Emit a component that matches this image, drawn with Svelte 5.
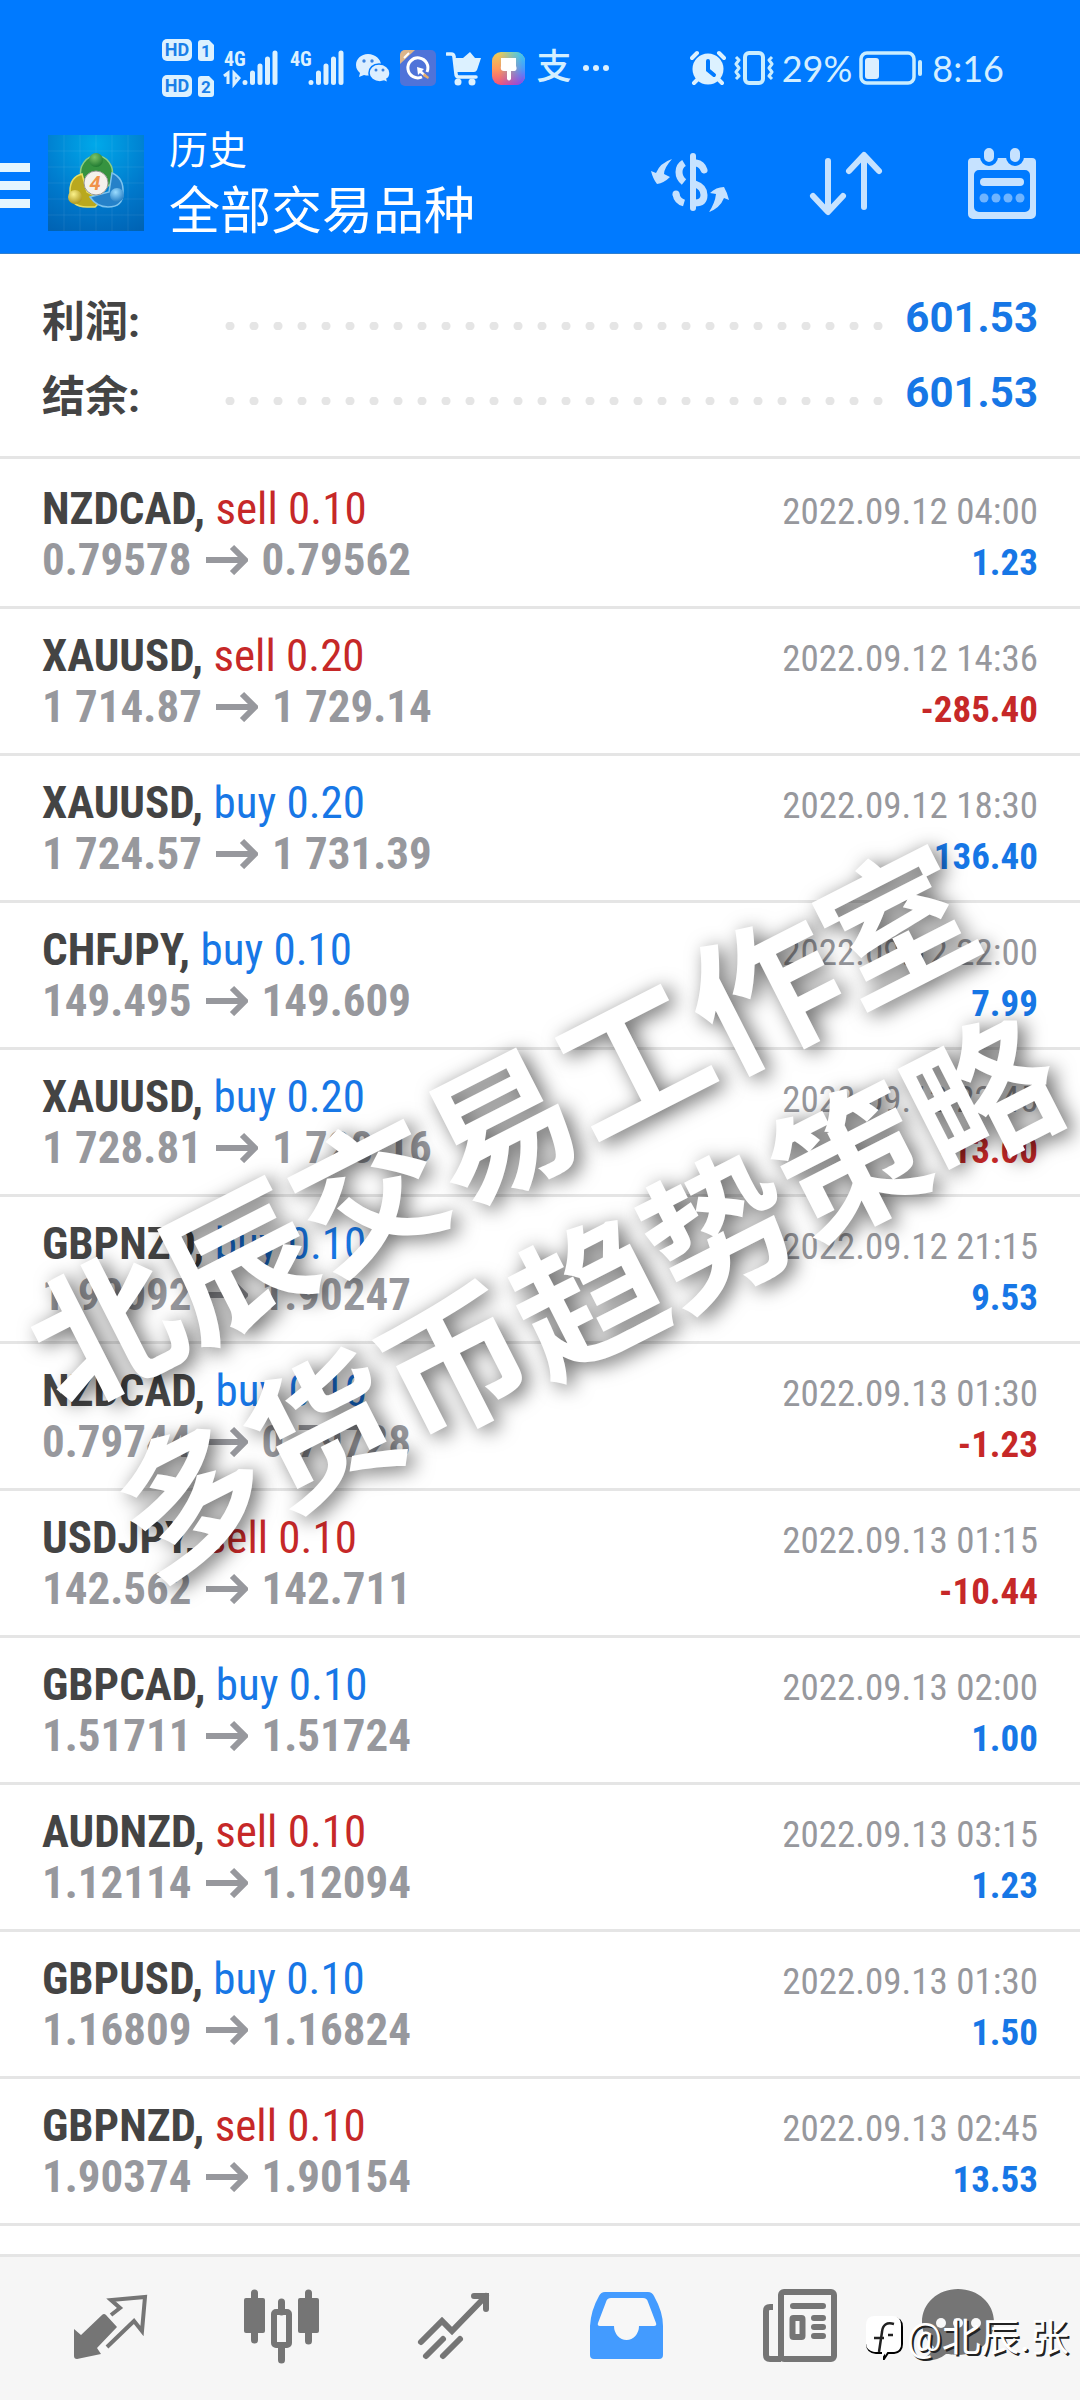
<script>
  let summary = [
    { label: "利润:", value: "601.53" },
    { label: "结余:", value: "601.53" }
  ];

  let deals = [
    { symbol: "NZDCAD", side: "sell", lots: "0.10", open: "0.79578", close: "0.79562", time: "2022.09.12 04:00", profit: "1.23" },
    { symbol: "XAUUSD", side: "sell", lots: "0.20", open: "1 714.87", close: "1 729.14", time: "2022.09.12 14:36", profit: "-285.40" },
    { symbol: "XAUUSD", side: "buy", lots: "0.20", open: "1 724.57", close: "1 731.39", time: "2022.09.12 18:30", profit: "136.40" },
    { symbol: "CHFJPY", side: "buy", lots: "0.10", open: "149.495", close: "149.609", time: "2022.09.12 22:00", profit: "7.99" },
    { symbol: "XAUUSD", side: "buy", lots: "0.20", open: "1 728.81", close: "1 728.16", time: "2022.09.12 22:45", profit: "-13.00" },
    { symbol: "GBPNZD", side: "buy", lots: "0.10", open: "1.90092", close: "1.90247", time: "2022.09.12 21:15", profit: "9.53" },
    { symbol: "NZDCAD", side: "buy", lots: "0.10", open: "0.79744", close: "0.79728", time: "2022.09.13 01:30", profit: "-1.23" },
    { symbol: "USDJPY", side: "sell", lots: "0.10", open: "142.562", close: "142.711", time: "2022.09.13 01:15", profit: "-10.44" },
    { symbol: "GBPCAD", side: "buy", lots: "0.10", open: "1.51711", close: "1.51724", time: "2022.09.13 02:00", profit: "1.00" },
    { symbol: "AUDNZD", side: "sell", lots: "0.10", open: "1.12114", close: "1.12094", time: "2022.09.13 03:15", profit: "1.23" },
    { symbol: "GBPUSD", side: "buy", lots: "0.10", open: "1.16809", close: "1.16824", time: "2022.09.13 01:30", profit: "1.50" },
    { symbol: "GBPNZD", side: "sell", lots: "0.10", open: "1.90374", close: "1.90154", time: "2022.09.13 02:45", profit: "13.53" }
  ];

  const isLoss = deal => deal.profit.startsWith("-");
</script>

<div class="app">
  <header>
    <!-- Status bar -->
    <div class="status">
      <div class="status-left">
        <svg width="52" height="60" viewBox="0 0 52 60">
          <g fill="#dcf1ff">
            <rect y="1" width="30" height="22" rx="5" />
            <rect y="37" width="30" height="22" rx="5" />
            <path d="M39 2h8l5 5v13a3 3 0 0 1-3 3H39a3 3 0 0 1-3-3V5a3 3 0 0 1 3-3z" />
            <path d="M39 38h8l5 5v13a3 3 0 0 1-3 3H39a3 3 0 0 1-3-3V41a3 3 0 0 1 3-3z" />
          </g>
          <g fill="#1a7fe8" font-size="18" font-weight="700" text-anchor="middle">
            <text x="15" y="18">HD</text>
            <text x="15" y="54">HD</text>
            <text x="44" y="19" font-size="17">1</text>
            <text x="44" y="55" font-size="17">2</text>
          </g>
        </svg>
        <svg class="signal" width="54" height="36" viewBox="0 0 54 36">
          <text x="0" y="16" font-size="20" fill="#dcf1ff" font-weight="700">4G</text>
          <path d="M0 26l4-3v11M10 23v11l5-6z" fill="none" stroke="#dcf1ff" stroke-width="3" />
          <path d="M21 32.500v0M28.500 23v9.500M36 16v16.500M43.500 9v23.500M51 3v29.500" stroke="#dcf1ff" stroke-width="5" stroke-linecap="round" />
        </svg>
        <svg class="signal" width="54" height="36" viewBox="0 0 54 36">
          <text x="0" y="16" font-size="20" fill="#dcf1ff" font-weight="700">4G</text>
          <path d="M21 32.500v0M28.500 23v9.500M36 16v16.500M43.500 9v23.500M51 3v29.500" stroke="#dcf1ff" stroke-width="5" stroke-linecap="round" />
        </svg>
        <svg width="34" height="36" viewBox="0 0 34 36">
          <path d="M12 4C5 4 0 9 0 15c0 4 2 6 4 8l-1 4 5-2c7 2 17-1 17-10C25 9 19 4 12 4z" fill="#dcefff" />
          <path d="M23 14c-6 0-10 4-10 9s5 9 11 9l4-1 4 2-1-4c2-1 3-3 3-6 0-5-5-9-11-9z" fill="#dcefff" stroke="#007aff" stroke-width="1.500" />
          <g fill="#3b83e0"><circle cx="8" cy="11" r="1.700" /><circle cx="16" cy="11" r="1.700" /><circle cx="20" cy="20" r="1.500" /><circle cx="27" cy="20" r="1.500" /></g>
        </svg>
        <svg width="36" height="36" viewBox="0 0 36 36">
          <rect width="36" height="36" rx="5" fill="#4f73d9" />
          <path d="M0 5a5 5 0 0 1 5-5h10L0 14z" fill="#dcb58a" />
          <path d="M4 8l5-5" stroke="#fff" stroke-width="2" />
          <path d="M22 27a10 10 0 1 1 5-5" fill="none" stroke="#fff" stroke-width="3" />
          <path d="M17 17l7 2-2 2 4 4-2 1-4-3-2 2z" fill="#fff" />
          <path d="M24 23l5 4-1 2-5-3z" fill="#e5ad6b" />
        </svg>
        <svg width="36" height="36" viewBox="0 0 36 36">
          <path d="M1 4h4q3 0 3 3l2 17q0 3 3 3h17" fill="none" stroke="#dcf1ff" stroke-width="3.500" stroke-linecap="round" />
          <path d="M9 8h8l7-6 5 6h6l-4 12q-1 2-3 2H11z" fill="#dcf1ff" />
          <circle cx="12" cy="32" r="3.500" fill="#dcf1ff" /><circle cx="26" cy="32" r="3.500" fill="#dcf1ff" />
        </svg>
        <svg width="34" height="36" viewBox="0 0 34 36">
          <defs>
            <linearGradient id="paintWarm" x1="0" y1="0" x2="0" y2="1">
              <stop offset="0" stop-color="#e8cf5a" /><stop offset=".5" stop-color="#ff9a5c" /><stop offset="1" stop-color="#f0527c" />
            </linearGradient>
            <linearGradient id="paintCool" x1="0" y1="0" x2="0" y2="1">
              <stop offset="0" stop-color="#35cdf5" /><stop offset=".5" stop-color="#4c9bfa" /><stop offset="1" stop-color="#8a45ea" />
            </linearGradient>
            <linearGradient id="paintFade"><stop offset=".2" stop-color="#000" /><stop offset=".9" stop-color="#fff" /></linearGradient>
            <mask id="paintMask"><rect width="34" height="36" fill="url(#paintFade)" /></mask>
          </defs>
          <rect y="2" width="33" height="33" rx="9" fill="url(#paintWarm)" />
          <rect y="2" width="33" height="33" rx="9" fill="url(#paintCool)" mask="url(#paintMask)" />
          <path d="M9 8h15v8q2 5-3 5h-2v8q-2 3-4 0v-8h-3q-4 0-3-5z" fill="#fff" />
        </svg>
        <span class="pay">支</span>
        <svg width="28" height="36" viewBox="0 0 28 36"><g fill="#dcf1ff"><circle cx="4" cy="18" r="3" /><circle cx="14" cy="18" r="3" /><circle cx="24" cy="18" r="3" /></g></svg>
      </div>
      <div class="status-right">
        <svg width="36" height="36" viewBox="0 0 36 36">
          <circle cx="18" cy="19" r="15.500" fill="#dcf1ff" />
          <path d="M2 8l5-5M34 8l-5-5M8 29l-4 4M28 29l4 4" stroke="#dcf1ff" stroke-width="4" stroke-linecap="round" />
          <path d="M18 11v9l6 5" fill="none" stroke="#007aff" stroke-width="4" stroke-linecap="round" />
        </svg>
        <svg width="42" height="36" viewBox="0 0 42 36">
          <rect x="12" y="3" width="18" height="30" rx="4" fill="none" stroke="#c9edff" stroke-width="4" />
          <path d="M3 7l3 3-3 4 3 4-3 4 3 4-3 3M39 7l-3 3 3 4-3 4 3 4-3 4 3 3" fill="none" stroke="#c9edff" stroke-width="3" stroke-linejoin="round" />
        </svg>
        <span>29%</span>
        <svg width="66" height="36" viewBox="0 0 66 36">
          <rect x="2" y="3" width="53" height="30" rx="6" fill="none" stroke="#c9edff" stroke-width="3.500" />
          <rect x="6" y="8" width="14" height="21" rx="3" fill="#dcefff" />
          <path d="M61 12v12" stroke="#c9edff" stroke-width="4" stroke-linecap="round" />
        </svg>
        <span>8:16</span>
      </div>
    </div>
    <!-- / Status bar -->
    <!-- App bar -->
    <div class="bar">
      <button class="menu" aria-label="Menu"><i></i><i></i><i></i></button>
      <svg class="logo" width="96" height="96" viewBox="0 0 96 96">
        <defs>
          <radialGradient id="logoBg" cx=".5" cy=".1" r="1"><stop offset="0" stop-color="#00a9ea" /><stop offset=".6" stop-color="#0079cc" /><stop offset="1" stop-color="#0063b4" /></radialGradient>
          <radialGradient id="green" cx=".4" cy=".3" r=".8"><stop offset="0" stop-color="#7cc468" /><stop offset="1" stop-color="#14702a" /></radialGradient>
          <radialGradient id="yellow" cx=".4" cy=".3" r=".8"><stop offset="0" stop-color="#fbf28a" /><stop offset="1" stop-color="#a58c10" /></radialGradient>
          <radialGradient id="sky" cx=".4" cy=".3" r=".8"><stop offset="0" stop-color="#9bdcff" /><stop offset="1" stop-color="#1873bd" /></radialGradient>
        </defs>
        <rect width="96" height="96" fill="url(#logoBg)" />
        <path d="M16 0v96M32 0v96M48 0v96M64 0v96M80 0v96M0 16h96M0 32h96M0 48h96M0 64h96M0 80h96" stroke="#fff" stroke-opacity=".07" />
        <path d="M33 42a16 17 0 1 1 31 0q0 6-3 9L48 37 36 47z" fill="#369340" stroke="#8ccd83" stroke-width="1.500" />
        <path d="M34 39q-12 3-12 17 0 16 17 16h8l7-7-15-8z" fill="#b9a81e" stroke="#e8df63" stroke-width="1.500" />
        <path d="M64 38q12 5 11 20 0 14-15 14-11 0-18-10l19-5z" fill="#2581c9" stroke="#7dc3ee" stroke-width="1.500" />
        <circle cx="48" cy="25" r="7" fill="url(#green)" />
        <circle cx="27" cy="62" r="7" fill="url(#yellow)" />
        <circle cx="69" cy="60" r="7" fill="url(#sky)" />
        <circle cx="48" cy="48" r="12" fill="#f4f1ec" stroke="#999" />
        <text x="47" y="55" text-anchor="middle" font-size="20" font-weight="700" font-style="italic" fill="#f0924a">4</text>
      </svg>
      <h1><small>历史</small>全部交易品种</h1>
      <div class="tools">
        <button aria-label="Symbols">
          <svg width="100" height="84" viewBox="0 0 100 84" fill="none" stroke="#c6e2ff">
            <path d="M53 15v52" stroke-width="6" stroke-linecap="round" />
            <path d="M44 22q-5 3-5 9t5 10" stroke-width="7" />
            <path d="M36 53q1 7 8 9" stroke-width="7" />
            <circle cx="36" cy="53" r="3.500" fill="#c6e2ff" stroke="none" />
            <path d="M56 22q6 1 8 7" stroke-width="7" stroke-linecap="round" />
            <path d="M55 43q9 3 9 11t-9 8" stroke-width="7" />
            <path d="M32 18Q24 27 24 33L30 36Q24 42 17 43Q13 38 11 30L16 32Q20 22 32 18Z" fill="#c6e2ff" stroke="none" />
            <path d="M69 71Q75 62 76 53L70 52Q76 46 84 46Q87 51 89 59L84 57Q80 67 69 71Z" fill="#c6e2ff" stroke="none" />
          </svg>
        </button>
        <button aria-label="Sort">
          <svg width="100" height="84" viewBox="0 0 100 84" fill="none" stroke="#c6e2ff" stroke-width="6" stroke-linecap="round" stroke-linejoin="round">
            <path d="M28 20v50M13 55l15 16 15-16M64 66V15M49 30l15-16 15 16" />
          </svg>
        </button>
        <button aria-label="Period">
          <svg width="100" height="84" viewBox="0 0 100 84">
            <path d="M12 17h60a4 4 0 0 1 4 4v52a5 5 0 0 1-5 5H13a5 5 0 0 1-5-5V21a4 4 0 0 1 4-4zm7 12a5 5 0 0 0-5 5v32a5 5 0 0 0 5 5h46a5 5 0 0 0 5-5V34a5 5 0 0 0-5-5z" fill="#c6e2ff" fill-rule="evenodd" />
            <g fill="#c6e2ff" stroke="#007aff" stroke-width="4"><rect x="22" y="5" width="14" height="18" rx="7" /><rect x="48" y="5" width="14" height="18" rx="7" /></g>
            <path d="M24 41h36" stroke="#c6e2ff" stroke-width="8" stroke-linecap="round" />
            <g fill="#6fb4ff"><circle cx="24" cy="57" r="4.500" /><circle cx="36" cy="57" r="4.500" /><circle cx="48" cy="57" r="4.500" /><circle cx="60" cy="57" r="4.500" /></g>
          </svg>
        </button>
      </div>
    </div>
    <!-- / App bar -->
  </header>

  <main>
    <dl class="summary">
      {#each summary as item}
        <div class="total">
          <dt>{item.label}</dt>
          <span class="dots"></span>
          <dd>{item.value}</dd>
        </div>
      {/each}
    </dl>

    <ul>
      {#each deals as deal}
        <li>
          <div class="line">
            <span class="symbol">{deal.symbol}, <span class={deal.side}>{deal.side} {deal.lots}</span></span>
            <time>{deal.time}</time>
          </div>
          <div class="line">
            <span class="prices">
              {deal.open}
              <svg width="42" height="32" viewBox="0 0 42 32"><path d="M0 17h38M26 4l13 13-13 13" fill="none" stroke="#97989d" stroke-width="6" /></svg>
              {deal.close}
            </span>
            <span class="profit" class:loss={isLoss(deal)}>{deal.profit}</span>
          </div>
        </li>
      {/each}
    </ul>
  </main>

  <!-- Tab bar -->
  <nav>
    <button aria-label="Quotes">
      <svg width="104" height="80" viewBox="0 0 104 80">
        <path d="M18 41l7 6 21-20q2-2 4 0l11 12-20 21 4 6-24 5q-3 0-3-3z" fill="#757575" />
        <path d="M55 27l9-7-9-8 34-3-3 34-8-10-27 26" fill="none" stroke="#757575" stroke-width="4" />
      </svg>
    </button>
    <button aria-label="Charts">
      <svg width="104" height="80" viewBox="0 0 104 80">
        <path d="M25.500 5v47M79.500 5v48M52.500 14v10M52.500 58v14" stroke="#757575" stroke-width="7" stroke-linecap="round" />
        <rect x="15" y="10" width="21" height="35" rx="2" fill="#757575" />
        <rect x="69" y="10" width="21" height="35" rx="2" fill="#757575" />
        <rect x="45" y="24" width="15" height="33" rx="2" fill="none" stroke="#757575" stroke-width="6" />
      </svg>
    </button>
    <button aria-label="Trade">
      <svg width="104" height="80" viewBox="0 0 104 80" fill="none" stroke="#757575" stroke-width="6" stroke-linecap="round">
        <path d="M19 54l21-21 10 10 34-35M72 8h12v13" />
        <path d="M24 68l17-17M41 68l17-17" />
      </svg>
    </button>
    <button aria-label="History">
      <svg width="104" height="80" viewBox="0 0 104 80">
        <path d="M16 38Q17 22 25 8q2-4 6-4h43q4 0 6 4 9 16 9 30v29q0 4-4 4H20q-4 0-4-4z" fill="#439bff" />
        <path d="M26 38q-3 0-2-3l8-21q1-4 5-4h32q4 0 5 4l8 21q1 3-2 3H65a12.500 14 0 0 1-25 0z" fill="#f7f7f7" />
      </svg>
    </button>
    <button aria-label="News">
      <svg width="104" height="80" viewBox="0 0 104 80" fill="none" stroke="#757575" stroke-width="6">
        <rect x="34" y="4" width="53" height="67" rx="3" />
        <path d="M26 19h-3q-4 0-4 4v44q0 4 4 4h11" />
        <path d="M46 18h30M67 30h9M67 39h9M67 48h9" stroke-linecap="round" />
        <rect x="45.500" y="30" width="10" height="19" rx="1" />
      </svg>
    </button>
    <button aria-label="Messages">
      <svg width="104" height="80" viewBox="0 0 104 80">
        <path d="M38 1c20 0 36 14 36 33S58 67 38 67c-6 0-8-1-12-1q-8 7-22 7-2 0-1-2 8-5 11-12C6 53 2 44 2 34 2 15 18 1 38 1z" fill="#757575" />
        <g fill="#f7f7f7"><circle cx="21" cy="35" r="5" /><circle cx="38" cy="35" r="5" /><circle cx="56" cy="35" r="5" /></g>
      </svg>
    </button>
    <div class="author">
      <svg width="38" height="44" viewBox="0 0 38 44">
        <path d="M10 2h17q9 0 9 9v17q0 8-8 9h-6l-4 6v-6h-8q-9-1-9-9" fill="none" stroke="#000" stroke-width="2" />
        <path d="M9 0h17q9 0 9 9v18q0 8-8 9h-7l-4 6v-6H9q-9-1-9-9V9q0-9 9-9z" fill="#fff" />
        <path d="M28 8q-11-3-12 8l-3 20M8 22h10M22 19h5" fill="none" stroke="#222" stroke-width="2.500" />
      </svg>
      <span>@北辰.张</span>
    </div>
  </nav>
  <!-- / Tab bar -->

  <p class="watermark">北辰交易工作室<br />多货币趋势策略</p>
</div>

<style>
  :global(body) {
    margin: 0;
    background: #fff;
  }
  .app {
    position: relative;
    display: flex;
    flex-direction: column;
    height: 100vh;
    overflow: hidden;
    font-family: Roboto, "Noto Sans CJK SC", sans-serif;
    color: #444;
  }
  button {
    padding: 0;
    border: 0;
    background: none;
  }
  svg {
    display: block;
    flex: none;
  }
  header {
    background: #007aff;
    border-bottom: 1px solid #2f7fd0;
    color: #fff;
  }
  .status {
    display: flex;
    justify-content: space-between;
    height: 88px;
    padding: 24px 76px 0 162px;
    color: #d4efff;
  }
  .status-left,
  .status-right {
    display: flex;
    align-items: center;
    gap: 10px;
  }
  .signal {
    margin-right: 2px;
    overflow: visible;
    font-family: "Roboto Condensed", Roboto, sans-serif;
  }
  .pay {
    width: 36px;
    font-size: 35px;
    font-weight: 500;
    line-height: 36px;
    text-align: center;
  }
  .status-right {
    font-family: Lato, sans-serif;
    font-size: 36px;
    gap: 7px;
  }
  .bar {
    display: flex;
    align-items: center;
    height: 141px;
    padding-right: 20px;
  }
  .menu {
    display: grid;
    gap: 9px;
    width: 30px;
    padding-top: 6px;
  }
  .menu i {
    height: 9px;
    background: #e4f6ff;
  }
  .logo {
    margin: 0 25px 0 18px;
  }
  h1 {
    flex: 1;
    margin: 0;
    padding-top: 3px;
    font-size: 51px;
    font-weight: 400;
    line-height: 66px;
  }
  small {
    display: block;
    font-size: 39px;
    line-height: 56px;
  }
  .tools {
    display: flex;
    gap: 60px;
  }
  main {
    flex: 1;
    min-height: 0;
    overflow: hidden;
  }
  .summary {
    margin: 0;
    padding: 26px 42px;
    border-bottom: 3px solid #e5e5e5;
  }
  .total {
    display: flex;
    align-items: center;
    height: 75px;
    font-size: 42px;
    font-weight: 700;
  }
  dt {
    width: 176px;
    font-size: 43px;
  }
  .dots {
    flex: 1;
    height: 8px;
    margin: 16px 14px 0 0;
    background: radial-gradient(circle, #e5e5e5 4px, transparent 5px) 0 0 / 24px 8px;
  }
  dd {
    margin: 0;
    color: #1777e6;
  }
  ul {
    margin: 0;
    padding: 3px 0 0;
    list-style: none;
  }
  li {
    padding: 21px 42px;
    border-bottom: 3px solid #e5e5e5;
    font-family: "Roboto Condensed", "Liberation Sans Narrow", Roboto, sans-serif;
  }
  .line {
    display: flex;
    align-items: baseline;
    justify-content: space-between;
    height: 51px;
    line-height: 51px;
    white-space: nowrap;
  }
  .symbol,
  .prices {
    font-size: 45px;
    font-weight: 700;
  }
  .buy,
  .sell {
    font-weight: 400;
    color: #1777e6;
  }
  .sell {
    color: #c62828;
  }
  .prices {
    display: flex;
    align-items: baseline;
    gap: 14px;
    color: #97989d;
  }
  time,
  .profit {
    font-size: 37px;
  }
  time {
    color: #97989d;
  }
  .profit {
    font-weight: 700;
    color: #1777e6;
  }
  .loss {
    color: #c62828;
  }
  nav {
    position: relative;
    display: grid;
    grid-template-columns: repeat(6, 1fr);
    padding: 31px 22px 32px;
    border-top: 3px solid #e5e5e5;
    background: #f6f6f6;
  }
  nav button {
    display: flex;
    justify-content: center;
  }
  .author {
    position: absolute;
    right: 11px;
    bottom: 34px;
    display: flex;
    align-items: center;
    gap: 3px;
    color: #fff;
    font-size: 39px;
    line-height: 56px;
    text-shadow: 2px 2px 0 #222;
  }
  .watermark {
    position: absolute;
    top: 1204px;
    left: 50%;
    margin: 0;
    color: #fff;
    font: 700 148px/190px "Noto Sans CJK SC", sans-serif;
    text-shadow: 4px 6px 20px rgba(0, 0, 0, 0.6);
    white-space: nowrap;
    transform: translate(-50%, -50%) rotate(-27deg);
    pointer-events: none;
  }
</style>
